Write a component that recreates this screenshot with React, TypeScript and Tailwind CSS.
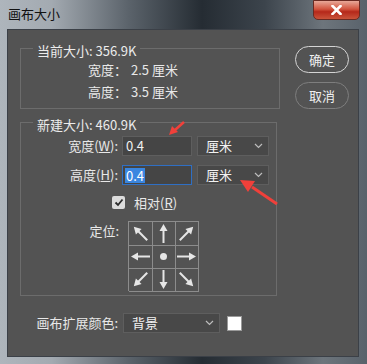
import React from "react";

const font = { fontFamily: '"Noto Sans CJK SC", "Noto Sans", "Liberation Sans", sans-serif' };

function Arrow({ angle }: { angle: number }) {
  return (
    <svg width="23" height="23" viewBox="0 0 23 23">
      <g transform={`rotate(${angle} 11.5 11.5)`}>
        <line x1="11.5" y1="21" x2="11.5" y2="7" stroke="#e6e6e6" strokeWidth="2" />
        <polygon points="11.5,2 7.5,9 15.5,9" fill="#e6e6e6" />
      </g>
    </svg>
  );
}

function Chevron() {
  return (
    <svg width="9" height="6" viewBox="0 0 9 6">
      <polyline points="1,1 4.5,4.5 8,1" fill="none" stroke="#bdbdbd" strokeWidth="1.2" />
    </svg>
  );
}

function Select({ text, w }: { text: string; w: string }) {
  return (
    <div className={`${w} h-[20px] bg-[#484848] border border-[#5e5e5e] flex items-center justify-between pl-[8px] pr-[5px] text-[#f2f2f2] text-[13px]`}>
      <span>{text}</span>
      <Chevron />
    </div>
  );
}

export default function App() {
  const cells: (number | null)[] = [-45, 0, 45, -90, null, 90, -135, 180, 135];
  return (
    <div
      className="w-[367px] h-[364px] relative overflow-hidden"
      style={font}
    >
      <div className="absolute inset-0 bg-[linear-gradient(to_right,#aeb5bc_0%,#a3aab1_14%,#5b636b_35%,#252c33_55%,#3c444c_72%,#6d757c_88%,#59626b_100%)]" />
      <div className="relative flex flex-col h-full">
        {/* title bar */}
        <div className="h-[29px] flex items-start pl-[8px] pt-[5px] text-[13px] text-[#111] leading-[18px]">
          画布大小
        </div>
        <div className="absolute right-[7px] top-0 w-[47px] h-[20px] rounded-b-[5px] border border-[#6a2a22] bg-[linear-gradient(to_bottom,#e8a898_0%,#d2553f_45%,#b5281a_60%,#c9533a_100%)] flex items-center justify-center">
          <svg width="11" height="10" viewBox="0 0 11 10">
            <path d="M1.5 1 L9.5 9 M9.5 1 L1.5 9" stroke="#ffffff" strokeWidth="2.6" strokeLinecap="square" />
          </svg>
        </div>
        {/* client */}
        <div className="ml-[7px] w-[352px] h-[328px] bg-[#535353] border border-[#3b4047] flex text-[#e8e8e8] text-[13px]">
          <div className="pl-[12px] pt-[9px] flex flex-col w-[275px]">
            <fieldset className="w-[260px] h-[70px] border border-[#6c6c6c] px-0">
              <legend className="ml-[12px] px-[4px] pt-[6px] leading-[12px] text-[#ececec]">当前大小: 356.9K</legend>
              <div className="mt-[5px] pl-[67px] flex flex-col gap-[6px] leading-[16px]">
                <div className="flex"><span>宽度：</span><span className="ml-[4px]">2.5 厘米</span></div>
                <div className="flex"><span>高度：</span><span className="ml-[4px]">3.5 厘米</span></div>
              </div>
            </fieldset>
            <fieldset className="mt-[4px] w-[257px] border border-[#6c6c6c] px-0 pb-[4px]">
              <legend className="ml-[12px] px-[4px] pt-[6px] leading-[12px] text-[#ececec]">新建大小: 460.9K</legend>
              <div className="mt-[5px] flex items-center">
                <div className="w-[98px] text-right pr-[1px]">宽度(<span className="underline">W</span>):</div>
                <div className="ml-[3px] w-[70px] h-[20px] bg-[#454545] border border-[#5e5e5e] flex items-center pl-[3px] text-[#f2f2f2]">0.4</div>
                <div className="ml-[5px]"><Select text="厘米" w="w-[72px]" /></div>
              </div>
              <div className="mt-[9px] flex items-center">
                <div className="w-[98px] text-right pr-[1px]">高度(<span className="underline">H</span>):</div>
                <div className="ml-[3px] w-[70px] h-[20px] bg-[#454545] border border-[#2f6fc4] flex items-center pl-[2px]">
                  <span className="bg-[#3a86e0] text-white leading-[15px] px-[1px]">0.4</span>
                </div>
                <div className="ml-[5px]"><Select text="厘米" w="w-[72px]" /></div>
              </div>
              <div className="mt-[11px] flex items-center h-[13px]">
                <div className="ml-[91px] w-[13px] h-[13px] rounded-[2px] bg-[#dcdcdc] flex items-center justify-center">
                  <svg width="10" height="9" viewBox="0 0 10 9">
                    <polyline points="1.5,4.5 4,7 8.5,1.5" fill="none" stroke="#2b2b2b" strokeWidth="1.8" />
                  </svg>
                </div>
                <span className="ml-[9px]">相对(<span className="underline">R</span>)</span>
              </div>
              <div className="mt-[12px] flex items-start">
                <div className="w-[98px] text-right pt-[2px] leading-[16px]">定位:</div>
                <div className="ml-[9px] grid grid-cols-[23px_23px_23px] grid-rows-[23px_23px_23px] border-l border-t border-[#8c8c8c] w-[71px]">
                  {cells.map((a, i) => (
                    <div key={i} className="w-[23px] h-[23px] border-r border-b border-[#8c8c8c] flex items-center justify-center box-content -mr-[1px] -mb-[1px]">
                      {a === null ? (
                        <div className="w-[7px] h-[7px] rounded-full bg-[#e6e6e6]" />
                      ) : (
                        <Arrow angle={a} />
                      )}
                    </div>
                  ))}
                </div>
              </div>
            </fieldset>
            <div className="mt-[17px] flex items-center">
              <div className="w-[98px] text-right">画布扩展颜色:</div>
              <div className="ml-[5px]"><Select text="背景" w="w-[97px]" /></div>
              <div className="ml-[7px] w-[15px] h-[15px] bg-white border border-[#9a9a9a]" />
            </div>
          </div>
          <div className="pt-[16px] pl-[12px] flex flex-col gap-[9px]">
            <div className="w-[54px] h-[27px] rounded-full border-[1.5px] border-[#d4d4d4] flex items-center justify-center text-[#f0f0f0]">确定</div>
            <div className="w-[54px] h-[27px] rounded-full border border-[#7e7e7e] flex items-center justify-center text-[#f0f0f0]">取消</div>
          </div>
        </div>
      </div>
      {/* red annotation arrows */}
      <svg className="absolute left-0 top-0 pointer-events-none" width="367" height="364">
        <line x1="184" y1="122" x2="175" y2="130" stroke="#f0403a" strokeWidth="2.5" />
        <polygon points="169,135 172,126 178,132" fill="#f0403a" />
        <line x1="277" y1="204" x2="252" y2="187" stroke="#f0403a" strokeWidth="3" />
        <polygon points="240,180 255,181 248,192" fill="#f0403a" />
      </svg>
    </div>
  );
}
